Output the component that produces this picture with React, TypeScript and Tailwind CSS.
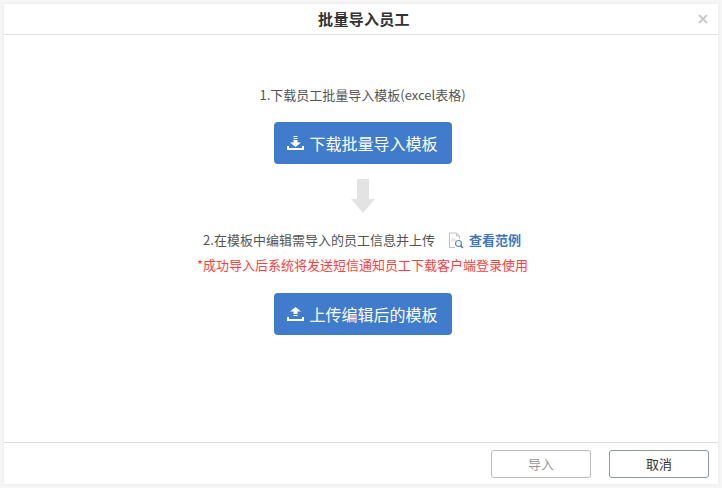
import React from 'react';

const font = { fontFamily: '"Noto Sans CJK SC", "Open Sans", sans-serif' };

const DownloadIcon = () => (
  <svg width="17" height="14" viewBox="0 0 17 14" fill="#fff">
    <path d="M6.500 0h4v1h-4zM6.500 2h4v1h-4zM6.500 4h4v2.500h3.500l-5.500 4.500L3 6.500h3.500z" />
    <path d="M0 10h2v2h13v-2h2v4H0z" />
  </svg>
);

const UploadIcon = () => (
  <svg width="17" height="14" viewBox="0 0 17 14" fill="#fff">
    <path d="M8.500 0L14 4.500h-3.500V7h-4V4.500H3zM6.500 8h4v1h-4z" />
    <path d="M0 10h2v2h13v-2h2v4H0z" />
  </svg>
);

const DocSearchIcon = () => (
  <svg width="17" height="17" viewBox="0 0 17 17" fill="none">
    <path d="M1.500 15.500V1h7l3 3v3M8.500 1v3h3M1.500 15.500H7" stroke="#bcc0c4" strokeWidth="1" />
    <path d="M3.500 6.500h4v3h-4z" fill="#dfe1e3" />
    <circle cx="10.500" cy="11.500" r="3" stroke="#5b8bc9" strokeWidth="1.200" />
    <path d="M12.700 13.700l2.300 2.300" stroke="#3f78c0" strokeWidth="1.500" />
  </svg>
);

const BlueButton = ({ icon, label }: { icon: React.ReactNode; label: string }) => (
  <button className="flex h-[42px] w-[178px] items-center justify-center gap-[5px] rounded-[4px] bg-[#417bcb] text-[16px] text-white">
    {icon}
    <span>{label}</span>
  </button>
);

export default function App() {
  return (
    <div className="h-[488px] w-[722px] bg-[#f6f6f6] p-1" style={font}>
      <div className="flex h-[480px] w-[714px] flex-col bg-white shadow-[0_0_3px_rgba(0,0,0,0.08)]">
        <div className="relative flex h-[31px] shrink-0 items-center justify-center border-b border-[#e2e2e2] pl-[6px]">
          <h1 className="text-[15px] font-bold tracking-[0.3px] text-[#333]">批量导入员工</h1>
          <svg className="absolute right-[10px] top-[10px]" width="10" height="10" viewBox="0 0 10 10">
            <path d="M1 1l8 8M9 1l-8 8" stroke="#c8c8c8" strokeWidth="1.800" />
          </svg>
        </div>

        <div className="flex flex-1 flex-col items-center pl-[3px] pt-[50px]">
          <p className="h-[20px] text-[13px] leading-[20px] text-[#555]">1.下载员工批量导入模板(excel表格)</p>
          <div className="mt-[17px]">
            <BlueButton icon={<DownloadIcon />} label="下载批量导入模板" />
          </div>
          <svg className="ml-[1px] mt-[15px]" width="24" height="34" viewBox="0 0 24 34" fill="#e3e3e3">
            <path d="M6 0h12v20h6L12 34 0 20h6z" />
          </svg>
          <div className="mt-[17px] flex h-[20px] items-center pr-[1px] text-[13px] text-[#555]">
            <span>2.在模板中编辑需导入的员工信息并上传</span>
            <span className="ml-[13px] mr-[4px]"><DocSearchIcon /></span>
            <a className="font-bold text-[#3f78c0]">查看范例</a>
          </div>
          <p className="mt-[5px] h-[20px] text-[13px] leading-[20px] text-[#ff4040]">*成功导入后系统将发送短信通知员工下载客户端登录使用</p>
          <div className="mt-[18px]">
            <BlueButton icon={<UploadIcon />} label="上传编辑后的模板" />
          </div>
        </div>

        <div className="flex h-[42px] shrink-0 items-center justify-end gap-[18px] border-t border-[#dcdce0] pr-[9px]">
          <button className="h-[28px] w-[100px] rounded-[3px] border border-[#bbb] text-[13px] text-[#999]">导入</button>
          <button className="h-[28px] w-[100px] rounded-[3px] border border-[#8d99a8] text-[13px] text-[#333]">取消</button>
        </div>
      </div>
    </div>
  );
}
